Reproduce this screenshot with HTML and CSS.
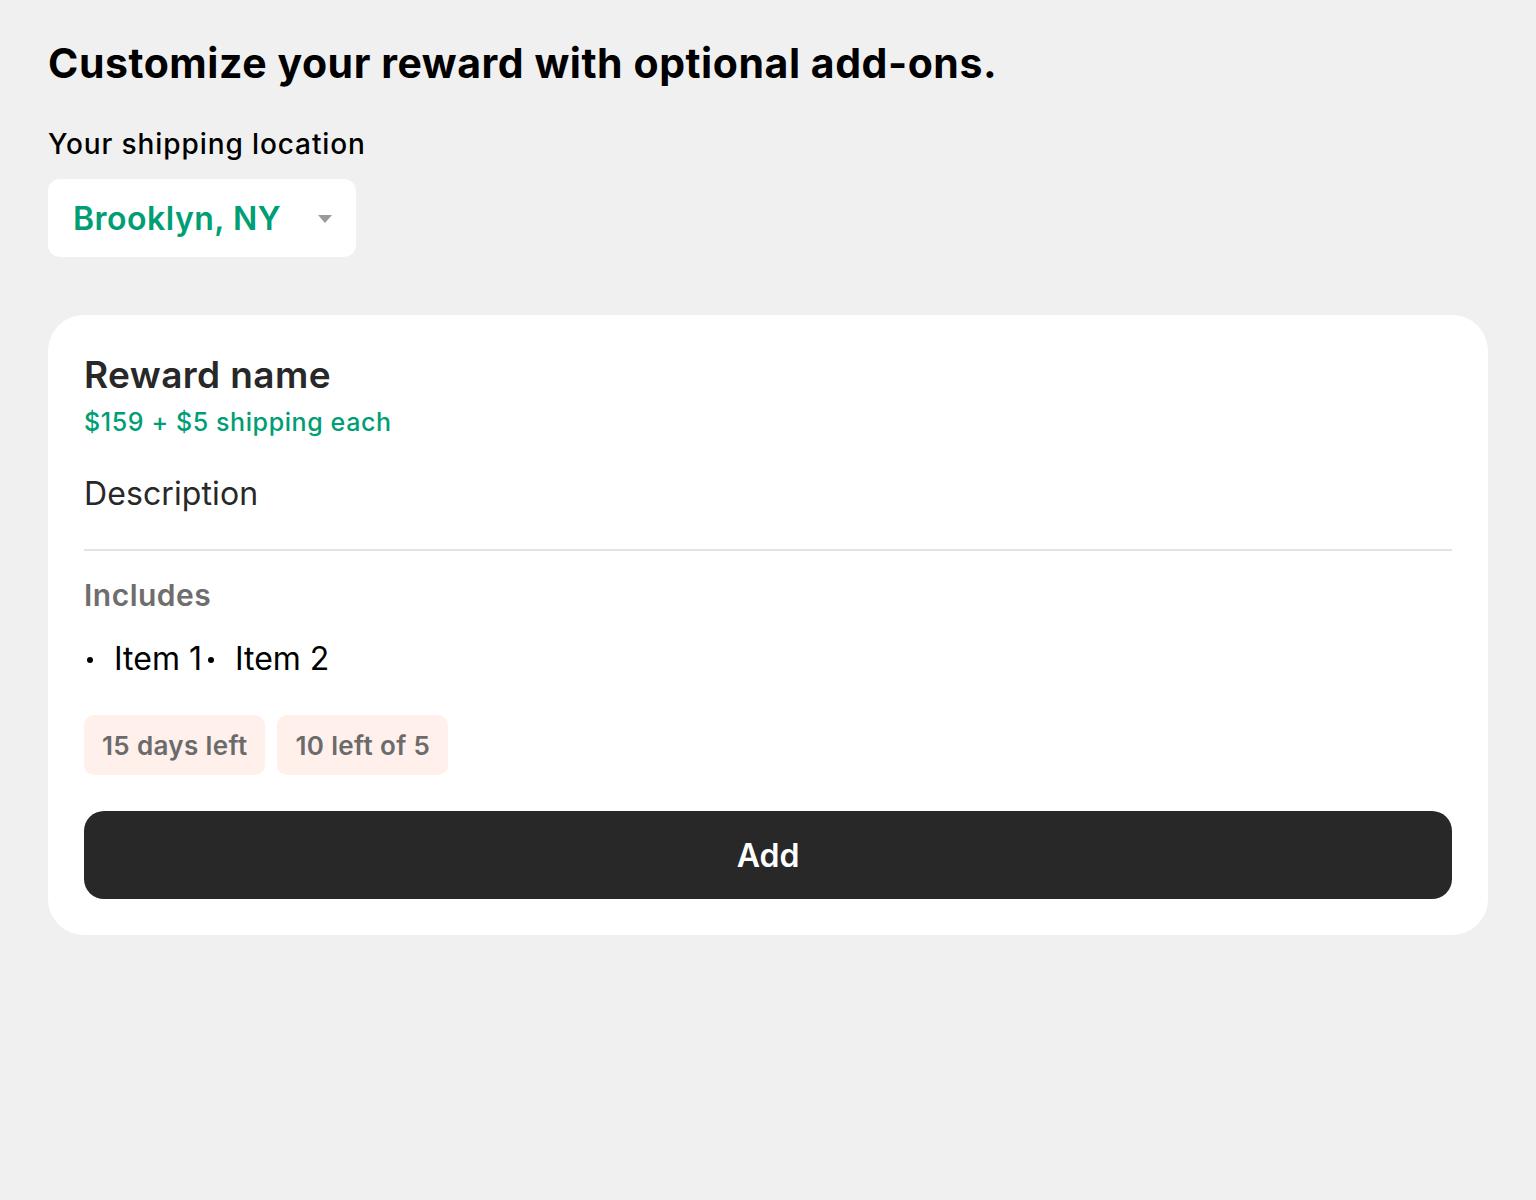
FILE: index.html
```html
<!DOCTYPE html>
<html lang="en">
<head>
<meta charset="utf-8">
<title>Add-ons</title>
<link rel="stylesheet" href="styles.css">
</head>
<body>
<main class="page">
  <h1 class="title">Customize your reward with optional add-ons.</h1>
  <div class="location">
    <label class="location-label">Your shipping location</label>
    <div class="select">
      <span class="select-value">Brooklyn, NY</span>
      <svg class="select-arrow" width="14" height="8" viewBox="0 0 14 8"><path d="M0 0 H14 L7 8 Z" fill="#9a9a9a"/></svg>
    </div>
  </div>
  <section class="card">
    <h2 class="reward-name">Reward name</h2>
    <p class="price">$159 + $5 shipping each</p>
    <p class="description">Description</p>
    <hr class="divider">
    <h3 class="includes">Includes</h3>
    <ul class="items">
      <li>Item 1</li>
      <li>Item 2</li>
    </ul>
    <div class="tags">
      <span class="tag">15 days left</span>
      <span class="tag">10 left of 5</span>
    </div>
    <button class="add-btn">Add</button>
  </section>
</main>
</body>
</html>
```
FILE: styles.css
```css
* { box-sizing: border-box; }
html, body { margin: 0; padding: 0; }
body {
  background: #f0f0f0;
  font-family: Inter, "Noto Sans", sans-serif;
  color: #000;
}
.page {
  padding: 37px 48px 48px 48px;
  display: flex;
  flex-direction: column;
}
.title {
  margin: 0;
  font-size: 41px;
  font-weight: 700;
  line-height: 52px;
  letter-spacing: 0.55px;
}
.location {
  margin-top: 37px;
  display: flex;
  flex-direction: column;
  align-items: flex-start;
}
.location-label {
  font-size: 28px;
  font-weight: 500;
  line-height: 36px;
  letter-spacing: 0.9px;
}
.select {
  margin-top: 17px;
  width: 308px;
  height: 78px;
  background: #fff;
  border-radius: 12px;
  display: flex;
  align-items: center;
  justify-content: space-between;
  padding: 0 24px 0 25px;
}
.select-value {
  color: #009e74;
  font-size: 32px;
  font-weight: 600;
  letter-spacing: 0.5px;
}
.select-arrow { margin-top: 2px; }
.card {
  margin-top: 58px;
  background: #fff;
  border-radius: 36px;
  padding: 36px;
  display: flex;
  flex-direction: column;
}
.reward-name {
  margin: 0;
  font-size: 37px;
  font-weight: 600;
  color: #282828;
  line-height: 48px;
  letter-spacing: 0.4px;
}
.price {
  margin: 6px 0 0 0;
  color: #009e74;
  font-size: 25px;
  font-weight: 500;
  line-height: 34px;
  letter-spacing: 0.6px;
}
.description {
  margin: 33px 0 0 0;
  font-size: 32px;
  color: #282828;
  line-height: 44px;
  letter-spacing: 0.1px;
}
.divider {
  margin: 33px 0 0 0;
  border: 0;
  border-top: 2px solid #e2e2e2;
}
.includes {
  margin: 24px 0 0 0;
  font-size: 30px;
  font-weight: 600;
  color: #6e6e6e;
  line-height: 40px;
  letter-spacing: 0.5px;
}
.items {
  margin: 22px 0 0 0;
  padding: 0;
  display: flex;
  list-style: none;
  font-size: 32px;
  line-height: 44px;
}
.items li {
  display: flex;
  align-items: center;
}
.items li::before {
  content: "";
  width: 6px;
  height: 6px;
  border-radius: 50%;
  background: #000;
  margin: 2px 21px 0 3px;
}
.items li + li::before { margin-left: 6px; }
.tags {
  margin-top: 34px;
  display: flex;
  gap: 12px;
}
.tag {
  background: #fff0eb;
  border-radius: 10px;
  height: 60px;
  padding: 0 18px;
  display: flex;
  align-items: center;
  font-size: 26px;
  font-weight: 600;
  color: #6b6b6b;
  letter-spacing: 0.35px;
}
.add-btn {
  margin-top: 36px;
  height: 88px;
  border: 0;
  border-radius: 20px;
  background: #282828;
  color: #fff;
  font-family: inherit;
  font-size: 32px;
  font-weight: 600;
}
```
